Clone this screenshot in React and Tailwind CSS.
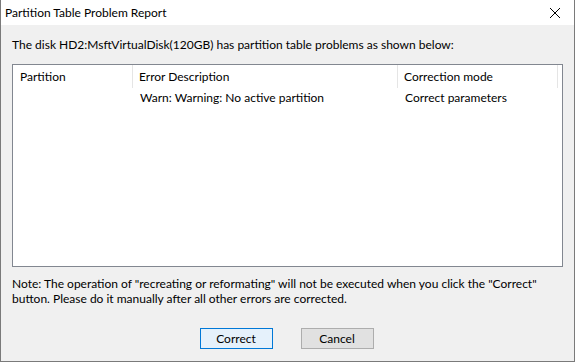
import React from "react";

export default function App() {
  return (
    <div className="w-[575px] h-[362px] bg-[#f0f0f0] flex flex-col border-x border-b border-[#7a7a7a] text-[12px] text-black overflow-hidden" style={{ fontFamily: 'Lato, sans-serif' }}>
      <div className="h-[25px] bg-white flex items-center justify-between pl-[4px] pr-[13px] shrink-0">
        <span className="leading-none">Partition Table Problem Report</span>
        <svg width="12" height="12" viewBox="0 0 12 12" className="mt-[1px]">
          <path d="M1 1 L11 11 M11 1 L1 11" stroke="#000" strokeWidth="1" />
        </svg>
      </div>
      <div className="flex-1 flex flex-col px-[11px]">
        <div className="h-[39px] pt-[12px] leading-[15px] whitespace-nowrap">The disk HD2:MsftVirtualDisk(120GB) has partition table problems as shown below:</div>
        <div className="h-[203px] bg-white border border-[#828790] flex flex-col">
          <div className="flex h-[23px] items-center">
            <div className="w-[120px] pl-[7px] border-r border-[#e5e5e5] h-full flex items-center">Partition</div>
            <div className="w-[265px] pl-[6px] border-r border-[#e5e5e5] h-full flex items-center">Error Description</div>
            <div className="w-[160px] pl-[6px] border-r border-[#e5e5e5] h-full flex items-center">Correction mode</div>
          </div>
          <div className="flex h-[20px] items-center">
            <div className="w-[121px] pl-[7px]"></div>
            <div className="w-[265px] pl-[6px]">Warn: Warning: No active partition</div>
            <div className="pl-[6px]">Correct parameters</div>
          </div>
        </div>
        <div className="pt-[9px] leading-[15px] whitespace-nowrap">
          Note: The operation of "recreating or reformating" will not be executed when you click the "Correct"<br />
          button. Please do it manually after all other errors are corrected.
        </div>
        <div className="flex justify-center gap-[28px] mt-[22px] pr-[2px]">
          <button className="w-[73px] h-[21px] bg-[#e5f1fb] border border-[#0078d7] leading-none">Correct</button>
          <button className="w-[73px] h-[21px] bg-[#e1e1e1] border border-[#adadad] leading-none">Cancel</button>
        </div>
      </div>
    </div>
  );
}
